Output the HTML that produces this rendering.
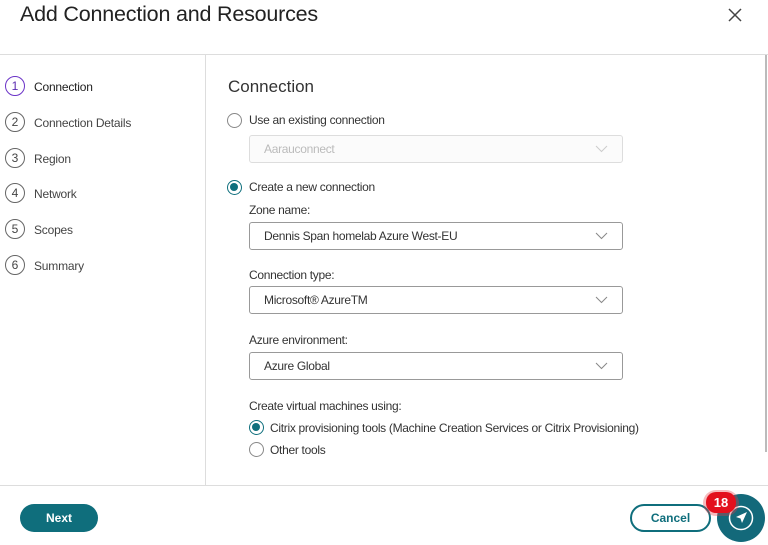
<!DOCTYPE html>
<html><head><style>
*{margin:0;padding:0;box-sizing:border-box}
body{width:768px;height:545px;overflow:hidden;background:#fff;font-family:"Liberation Sans",sans-serif;color:#333;position:relative}
.a{position:absolute}
.t{font-size:12px;white-space:nowrap;letter-spacing:-0.3px}
.step{position:absolute;left:5px;width:20px;height:20px;border:1.5px solid #666;border-radius:50%;font-size:12px;display:flex;align-items:center;justify-content:center;color:#444;line-height:1}
.sl{position:absolute;left:34px;font-size:12px;color:#444;letter-spacing:-0.2px}
.sel{position:absolute;left:249px;width:374px;height:28px;border:1px solid #999;border-radius:3px;font-size:12px;padding-left:14px;line-height:26px;color:#333;letter-spacing:-0.3px}
.sel svg{position:absolute;right:14px;top:9px}
.rad{position:absolute;width:15px;height:15px;border:1px solid #888;border-radius:50%}
.rad.on{border:1.5px solid #0f6f7d}
.rad.on::after{content:"";position:absolute;left:2px;top:2px;width:8px;height:8px;border-radius:50%;background:#0f6f7d}
</style></head><body>
<div class="a" style="left:20px;top:2px;font-size:21.5px;color:#222;letter-spacing:-0.2px">Add Connection and Resources</div>
<svg class="a" style="left:728px;top:8px" width="14" height="14"><path d="M1 1L13 13M13 1L1 13" stroke="#444" stroke-width="1.5"/></svg>
<div class="a" style="left:0;top:54px;width:768px;height:1px;background:#ddd"></div>
<div class="a" style="left:205px;top:55px;width:1px;height:430px;background:#ddd"></div>
<div class="a" style="left:0;top:485px;width:768px;height:1px;background:#ddd"></div>
<div class="a" style="left:765px;top:55px;width:2px;height:397px;background:#bbb"></div>

<div class="step" style="top:76px;border-color:#6b33c7;color:#5a2bb0">1</div><div class="sl" style="top:80px;color:#222">Connection</div>
<div class="step" style="top:112px">2</div><div class="sl" style="top:116px">Connection Details</div>
<div class="step" style="top:148px">3</div><div class="sl" style="top:152px">Region</div>
<div class="step" style="top:183px">4</div><div class="sl" style="top:187px">Network</div>
<div class="step" style="top:219px">5</div><div class="sl" style="top:223px">Scopes</div>
<div class="step" style="top:255px">6</div><div class="sl" style="top:259px">Summary</div>

<div class="a" style="left:228px;top:77px;font-size:17px;color:#333">Connection</div>
<div class="rad" style="left:227px;top:113px"></div><div class="a t" style="left:249px;top:113px">Use an existing connection</div>
<div class="sel" style="top:135px;border-color:#ddd;color:#bbb;background:#fbfbfb">Aarauconnect<svg width="13" height="8"><path d="M1 1L6.5 6.5L12 1" fill="none" stroke="#ccc"/></svg></div>
<div class="rad on" style="left:227px;top:180px"></div><div class="a t" style="left:249px;top:180px">Create a new connection</div>
<div class="a t" style="left:249px;top:203px">Zone name:</div>
<div class="sel" style="top:222px">Dennis Span homelab Azure West-EU<svg width="13" height="8"><path d="M1 1L6.5 6.5L12 1" fill="none" stroke="#888"/></svg></div>
<div class="a t" style="left:249px;top:268px">Connection type:</div>
<div class="sel" style="top:286px">Microsoft® AzureTM<svg width="13" height="8"><path d="M1 1L6.5 6.5L12 1" fill="none" stroke="#888"/></svg></div>
<div class="a t" style="left:249px;top:333px">Azure environment:</div>
<div class="sel" style="top:352px">Azure Global<svg width="13" height="8"><path d="M1 1L6.5 6.5L12 1" fill="none" stroke="#888"/></svg></div>
<div class="a t" style="left:249px;top:399px">Create virtual machines using:</div>
<div class="rad on" style="left:249px;top:420px"></div><div class="a t" style="left:270px;top:421px">Citrix provisioning tools (Machine Creation Services or Citrix Provisioning)</div>
<div class="rad" style="left:249px;top:442px"></div><div class="a t" style="left:270px;top:443px">Other tools</div>

<div class="a" style="left:20px;top:504px;width:78px;height:28px;border-radius:14px;background:#0f6e7c;color:#fff;font-size:12px;font-weight:bold;text-align:center;line-height:28px">Next</div>
<div class="a" style="left:630px;top:504px;width:81px;height:28px;border-radius:14px;border:2px solid #0f6e7c;color:#0f6e7c;font-size:12px;font-weight:bold;text-align:center;line-height:24px">Cancel</div>
<div class="a" style="left:717px;top:494px;width:48px;height:48px;border-radius:50%;background:#13697a"></div>
<svg class="a" style="left:727px;top:504px" width="28" height="28"><circle cx="14" cy="14" r="11.5" fill="none" stroke="#fff" stroke-width="1.5"/><path d="M20 8L9 13L13.5 14.5L15 19Z" fill="#fff"/></svg>
<div class="a" style="left:703px;top:490px;width:36px;height:26px;border-radius:13px;background:rgba(230,60,70,.35)"></div>
<div class="a" style="left:706px;top:492px;width:30px;height:21px;border-radius:10px;background:#e3101d;color:#fff;font-size:13px;font-weight:bold;text-align:center;line-height:21px">18</div>
</body></html>
